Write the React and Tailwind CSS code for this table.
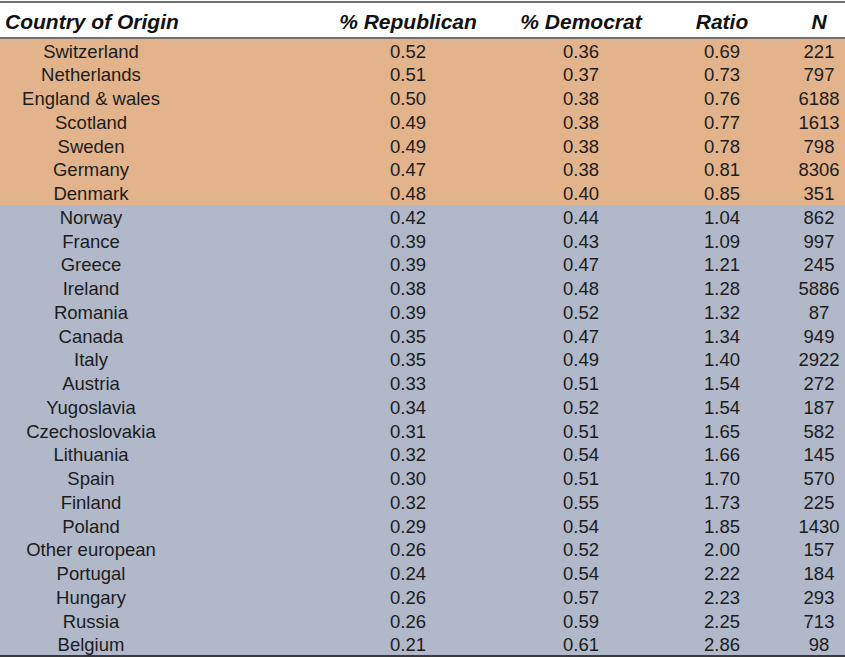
import React from "react";

const rows = [
  ["Switzerland", "0.52", "0.36", "0.69", "221", "o"],
  ["Netherlands", "0.51", "0.37", "0.73", "797", "o"],
  ["England & wales", "0.50", "0.38", "0.76", "6188", "o"],
  ["Scotland", "0.49", "0.38", "0.77", "1613", "o"],
  ["Sweden", "0.49", "0.38", "0.78", "798", "o"],
  ["Germany", "0.47", "0.38", "0.81", "8306", "o"],
  ["Denmark", "0.48", "0.40", "0.85", "351", "o"],
  ["Norway", "0.42", "0.44", "1.04", "862", "b"],
  ["France", "0.39", "0.43", "1.09", "997", "b"],
  ["Greece", "0.39", "0.47", "1.21", "245", "b"],
  ["Ireland", "0.38", "0.48", "1.28", "5886", "b"],
  ["Romania", "0.39", "0.52", "1.32", "87", "b"],
  ["Canada", "0.35", "0.47", "1.34", "949", "b"],
  ["Italy", "0.35", "0.49", "1.40", "2922", "b"],
  ["Austria", "0.33", "0.51", "1.54", "272", "b"],
  ["Yugoslavia", "0.34", "0.52", "1.54", "187", "b"],
  ["Czechoslovakia", "0.31", "0.51", "1.65", "582", "b"],
  ["Lithuania", "0.32", "0.54", "1.66", "145", "b"],
  ["Spain", "0.30", "0.51", "1.70", "570", "b"],
  ["Finland", "0.32", "0.55", "1.73", "225", "b"],
  ["Poland", "0.29", "0.54", "1.85", "1430", "b"],
  ["Other european", "0.26", "0.52", "2.00", "157", "b"],
  ["Portugal", "0.24", "0.54", "2.22", "184", "b"],
  ["Hungary", "0.26", "0.57", "2.23", "293", "b"],
  ["Russia", "0.26", "0.59", "2.25", "713", "b"],
  ["Belgium", "0.21", "0.61", "2.86", "98", "b"],
];

export default function App() {
  return (
    <div
      className="w-[845px] h-[657px] bg-white pt-px overflow-hidden border-b-2 border-[#3a3a3a] text-[#1c1c1c]"
      style={{ fontFamily: '"Liberation Sans", Arial, sans-serif' }}
    >
      <div className="flex flex-col">
        <div className="flex items-center h-[38px] pt-[2px] border-t-2 border-b-2 border-[#707070] bg-white text-[21px] font-bold italic leading-none text-[#111]">
          <div className="w-[182px] shrink-0 pl-[5px] whitespace-nowrap">Country of Origin</div>
          <div className="w-[156px] shrink-0 ml-[148px] text-center whitespace-nowrap">% Republican</div>
          <div className="w-[190px] shrink-0 text-center whitespace-nowrap">% Democrat</div>
          <div className="w-[92px] shrink-0 text-center">Ratio</div>
          <div className="w-[52px] shrink-0 ml-[25px] text-center">N</div>
        </div>
        {rows.map((r) => (
          <div
            key={r[0]}
            className={
              "flex items-center h-[23.76px] pt-[2px] shrink-0 text-[18.5px] leading-none " +
              (r[5] === "o" ? "bg-[#e3b38b]" : "bg-[#b1b8c9]")
            }
          >
            <div className="w-[182px] shrink-0 text-center whitespace-nowrap">{r[0]}</div>
            <div className="w-[156px] shrink-0 ml-[148px] text-center">{r[1]}</div>
            <div className="w-[190px] shrink-0 text-center">{r[2]}</div>
            <div className="w-[92px] shrink-0 text-center">{r[3]}</div>
            <div className="w-[52px] shrink-0 ml-[25px] text-center">{r[4]}</div>
          </div>
        ))}
      </div>
    </div>
  );
}
